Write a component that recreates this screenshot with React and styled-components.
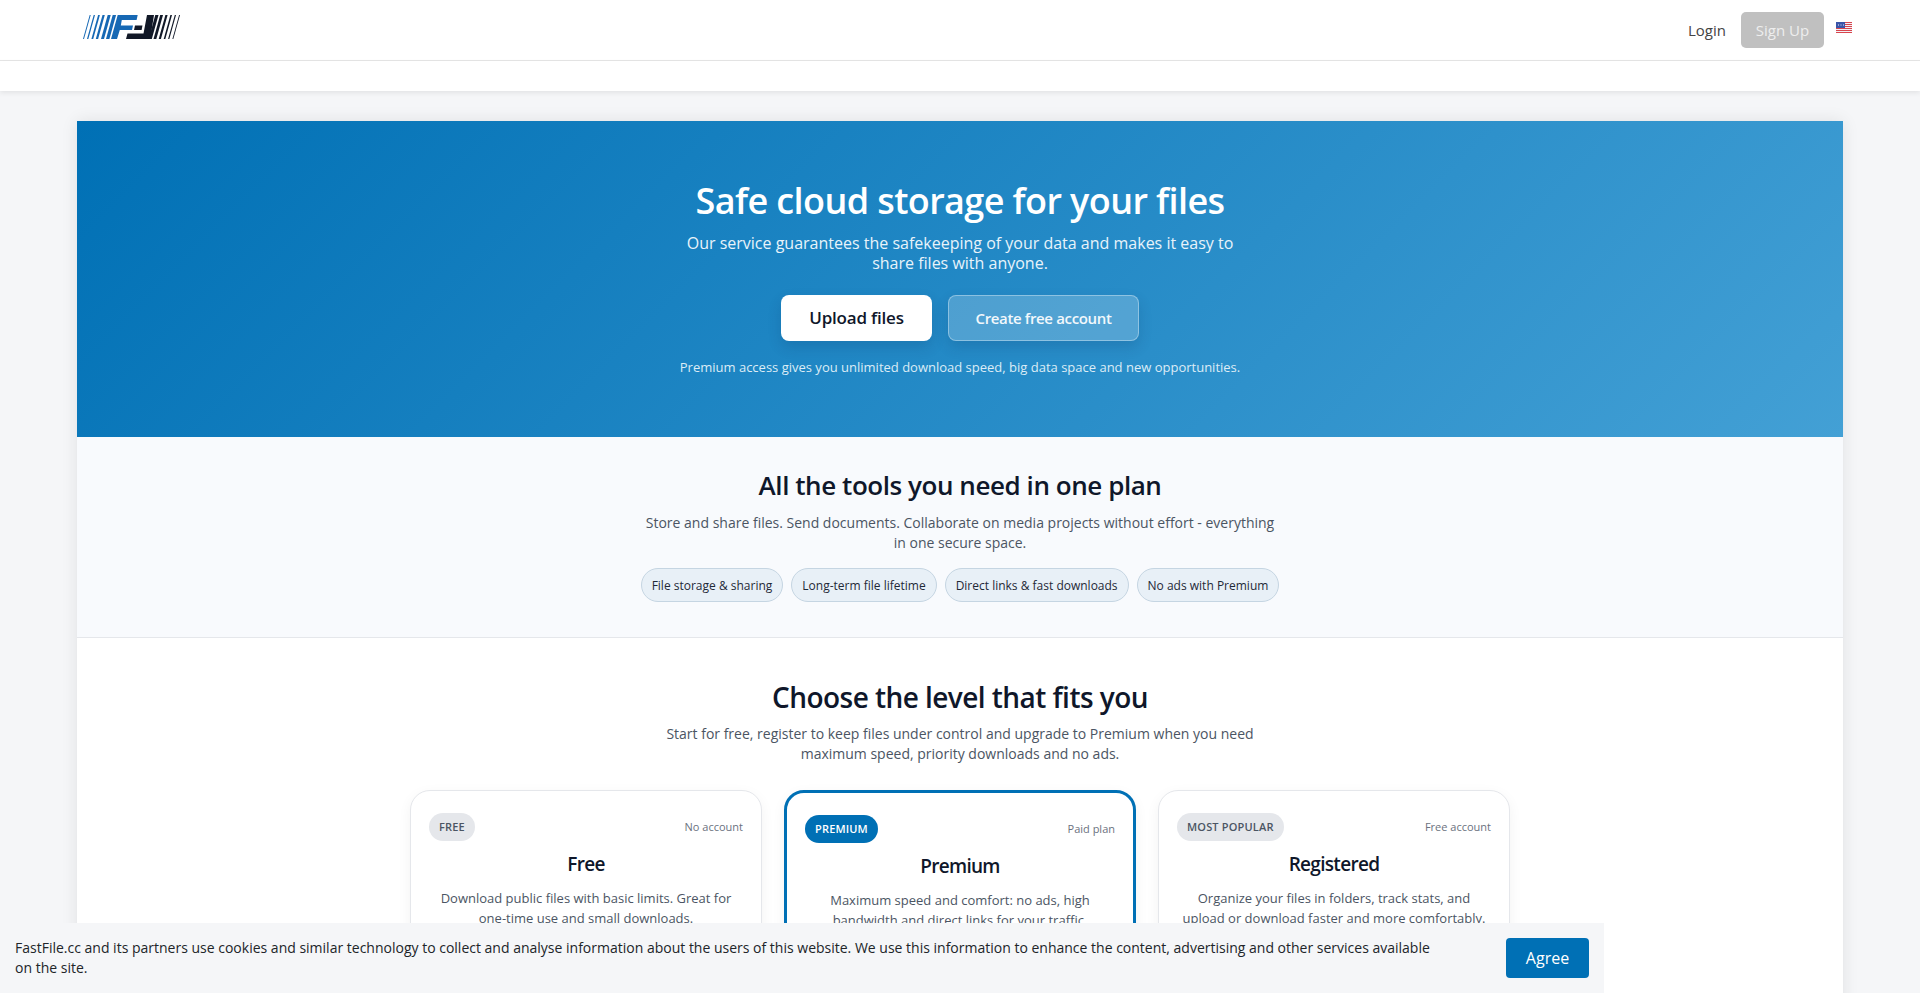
import React from 'react';
import styled, { createGlobalStyle } from 'styled-components';

const GlobalStyle = createGlobalStyle`
  html, body {
    margin: 0;
    height: 100%;
    overflow: hidden;
    background: #f5f6f8;
    font-family: "Open Sans", "Liberation Sans", sans-serif;
  }
  * { box-sizing: border-box; }
`;

const Header = styled.header`
  height: 61px;
  background: #fff;
  border-bottom: 1px solid #e6e6e6;
  display: flex;
  align-items: flex-start;
  justify-content: space-between;
  padding: 12px 68px 0 83px;
`;
const LogoMark = styled.svg`
  width: 98px;
  height: 24px;
  margin-top: 3px;
`;
const Nav = styled.nav`
  display: flex;
  align-items: flex-start;
`;
const LoginLink = styled.a`
  font-size: 15px;
  line-height: 36px;
  color: #444;
  margin-right: 15px;
`;
const SignUp = styled.a`
  width: 83px;
  height: 36px;
  background: #c0c0c0;
  border-radius: 5px;
  color: #eee;
  font-size: 15px;
  line-height: 36px;
  text-align: center;
`;
const Flag = styled.svg`
  width: 16px;
  height: 11px;
  margin: 10px 0 0 12px;
`;
const SubBar = styled.div`
  height: 30px;
  background: #fff;
  box-shadow: 0 2px 5px rgba(0, 0, 0, 0.08);
`;
const Main = styled.main`
  width: 1766px;
  margin: 30px auto 0;
  background: #fff;
  box-shadow: 0 0 16px rgba(0, 0, 0, 0.09);
`;
const Hero = styled.section`
  height: 316px;
  padding-top: 58px;
  background: linear-gradient(135deg, #0070b5 0%, #43a0d5 100%);
  color: #fff;
  text-align: center;
`;
const HeroTitle = styled.h1`
  margin: 0;
  font-size: 36px;
  line-height: 44px;
  font-weight: 600;
  letter-spacing: -0.6px;
`;
const HeroText = styled.p`
  width: 570px;
  margin: 10px auto 0;
  font-size: 16px;
  line-height: 20px;
  color: #e8f3fa;
`;
const HeroActions = styled.div`
  display: flex;
  justify-content: center;
  gap: 16px;
  margin-top: 22px;
`;
const HeroButton = styled.a`
  height: 46px;
  border-radius: 8px;
  display: flex;
  align-items: center;
  justify-content: center;
  font-weight: 600;
  box-shadow: 0 6px 14px rgba(0, 40, 80, 0.16);
  ${(p) =>
    p.$primary
      ? `width: 151px; background: #fff; color: #0f172a; font-size: 17px; letter-spacing: -0.2px; padding-bottom: 2px;`
      : `width: 191px; background: rgba(255,255,255,0.2); border: 1px solid rgba(255,255,255,0.35); color: #f2f8fc; font-size: 15px; letter-spacing: -0.35px;`}
`;
const HeroNote = styled.p`
  margin: 17px 0 0;
  font-size: 13px;
  line-height: 18px;
  color: #dcecf6;
`;
const Tools = styled.section`
  height: 201px;
  padding-top: 30px;
  background: #f8fafd;
  border-bottom: 1px solid #e5e7eb;
  text-align: center;
`;
const SectionTitle = styled.h2`
  margin: 0;
  font-size: ${(p) => (p.$large ? '28px' : '26px')};
  letter-spacing: ${(p) => (p.$large ? '-0.55px' : '-0.44px')};
  line-height: 36px;
  font-weight: 600;
  color: #0f172a;
`;
const SectionText = styled.p`
  width: 640px;
  margin: ${(p) => (p.$lower ? '10px' : '9px')} auto 0;
  font-size: 14px;
  line-height: 20px;
  color: #4b5563;
`;
const Chips = styled.div`
  display: flex;
  justify-content: center;
  gap: 8px;
  margin-top: 15px;
`;
const Chip = styled.span`
  height: 34px;
  padding: 0 10px;
  display: flex;
  align-items: center;
  border-radius: 17px;
  border: 1px solid #c5d5e2;
  background: #e8f0f7;
  color: #1f2937;
  font-size: 12px;
`;
const Levels = styled.section`
  padding-top: 41px;
  text-align: center;
`;
const Plans = styled.div`
  display: grid;
  grid-template-columns: repeat(3, 352px);
  gap: 22px;
  justify-content: center;
  margin-top: 26px;
`;
const Plan = styled.article`
  height: 300px;
  padding: 22px 18px;
  background: #fff;
  border: ${(p) => (p.$featured ? '3px solid #0070b5' : '1px solid #e5e7eb')};
  border-radius: 20px;
  box-shadow: 0 4px 14px rgba(15, 23, 42, 0.05);
`;
const PlanTop = styled.div`
  display: flex;
  align-items: center;
  justify-content: space-between;
`;
const Badge = styled.span`
  height: 28px;
  padding: 0 10px 2px;
  display: flex;
  align-items: center;
  border-radius: 14px;
  background: ${(p) => (p.$featured ? '#0070b5' : '#e5e7eb')};
  color: ${(p) => (p.$featured ? '#fff' : '#4b5563')};
  font-size: 11px;
  font-weight: 600;
  letter-spacing: 0.17px;
`;
const PlanHint = styled.span`
  font-size: 11px;
  color: #6b7280;
  padding-bottom: 2px;
`;
const PlanName = styled.h3`
  margin: 8px 0 0;
  font-size: 19px;
  letter-spacing: -0.7px;
  line-height: 30px;
  font-weight: 600;
  color: #0f172a;
`;
const PlanText = styled.p`
  margin: 9px 0 0;
  font-size: 13px;
  line-height: 20px;
  color: #4b5563;
`;
const CookieBar = styled.div`
  position: fixed;
  left: 0;
  bottom: 0;
  width: 1604px;
  height: 70px;
  padding: 15px 15px 0;
  display: flex;
  align-items: flex-start;
  justify-content: space-between;
  background: #f5f6f8;
`;
const CookieText = styled.p`
  width: 1420px;
  margin: 0;
  font-size: 14px;
  line-height: 20px;
  color: #212529;
`;
const Agree = styled.a`
  width: 83px;
  height: 40px;
  background: #0070b5;
  border-radius: 4px;
  color: #fff;
  font-size: 16px;
  line-height: 40px;
  text-align: center;
`;

const blueStripes = [[0, 1], [4, 1.3], [8.4, 1.8], [12.8, 2.3], [18, 3], [23, 3.4]];
const blackStripes = [[75.5, 3.2], [80, 2.8], [84.6, 2.2], [89, 1.6], [93, 1.2], [97, 0.9]];

const Logo = () => (
  <LogoMark viewBox="0 0 98 24">
    {blueStripes.map(([x, w]) => (
      <polygon key={x} points={`${x + 6.7},0 ${x + 6.7 + w},0 ${x + w},24 ${x},24`} fill="#1668b4" />
    ))}
    <polygon points="34.7,0 54.7,0 53.6,5 38.8,5 37.8,10.6 50,10.6 49,15 36.8,15 34,24 28,24" fill="#1668b4" />
    <polygon points="52,10.6 59.5,10.6 58.6,15 51,15" fill="#111827" />
    <polygon points="44.5,18.5 60.5,18.5 64,0 71,0 67.2,24 43,24" fill="#111827" />
    {blackStripes.map(([x, w]) => (
      <polygon key={x} points={`${x - w},0 ${x},0 ${x - 6.7},24 ${x - 6.7 - w},24`} fill="#111827" />
    ))}
  </LogoMark>
);

const UsFlag = () => (
  <Flag viewBox="0 0 16 11">
    <rect width="16" height="11" fill="#f1f1f6" />
    {[0, 2, 4, 6, 8, 10].map((y) => (
      <rect key={y} y={y} width="16" height="1" fill="#d8464e" />
    ))}
    <rect width="9" height="6" fill="#3a55a8" />
    {[2, 4.5, 7].map((x) => (
      <rect key={x} x={x} y="2.5" width="1" height="1" fill="#e8ecf8" />
    ))}
  </Flag>
);

const plans = [
  { badge: 'FREE', hint: 'No account', name: 'Free', text: 'Download public files with basic limits. Great for one-time use and small downloads.' },
  { badge: 'PREMIUM', hint: 'Paid plan', name: 'Premium', text: 'Maximum speed and comfort: no ads, high bandwidth and direct links for your traffic.', featured: true },
  { badge: 'MOST POPULAR', hint: 'Free account', name: 'Registered', text: 'Organize your files in folders, track stats, and upload or download faster and more comfortably.' },
];

const chips = ['File storage & sharing', 'Long-term file lifetime', 'Direct links & fast downloads', 'No ads with Premium'];

export default function App() {
  return (
    <>
      <GlobalStyle />
      <Header>
        <Logo />
        <Nav>
          <LoginLink>Login</LoginLink>
          <SignUp>Sign Up</SignUp>
          <UsFlag />
        </Nav>
      </Header>
      <SubBar />
      <Main>
        <Hero>
          <HeroTitle>Safe cloud storage for your files</HeroTitle>
          <HeroText>Our service guarantees the safekeeping of your data and makes it easy to share files with anyone.</HeroText>
          <HeroActions>
            <HeroButton $primary>Upload files</HeroButton>
            <HeroButton>Create free account</HeroButton>
          </HeroActions>
          <HeroNote>Premium access gives you unlimited download speed, big data space and new opportunities.</HeroNote>
        </Hero>
        <Tools>
          <SectionTitle>All the tools you need in one plan</SectionTitle>
          <SectionText $lower>Store and share files. Send documents. Collaborate on media projects without effort - everything in one secure space.</SectionText>
          <Chips>
            {chips.map((c) => <Chip key={c}>{c}</Chip>)}
          </Chips>
        </Tools>
        <Levels>
          <SectionTitle $large>Choose the level that fits you</SectionTitle>
          <SectionText>Start for free, register to keep files under control and upgrade to Premium when you need maximum speed, priority downloads and no ads.</SectionText>
          <Plans>
            {plans.map((p) => (
              <Plan key={p.name} $featured={p.featured}>
                <PlanTop>
                  <Badge $featured={p.featured}>{p.badge}</Badge>
                  <PlanHint>{p.hint}</PlanHint>
                </PlanTop>
                <PlanName>{p.name}</PlanName>
                <PlanText>{p.text}</PlanText>
              </Plan>
            ))}
          </Plans>
        </Levels>
      </Main>
      <CookieBar>
        <CookieText>FastFile.cc and its partners use cookies and similar technology to collect and analyse information about the users of this website. We use this information to enhance the content, advertising and other services available on the site.</CookieText>
        <Agree>Agree</Agree>
      </CookieBar>
    </>
  );
}
